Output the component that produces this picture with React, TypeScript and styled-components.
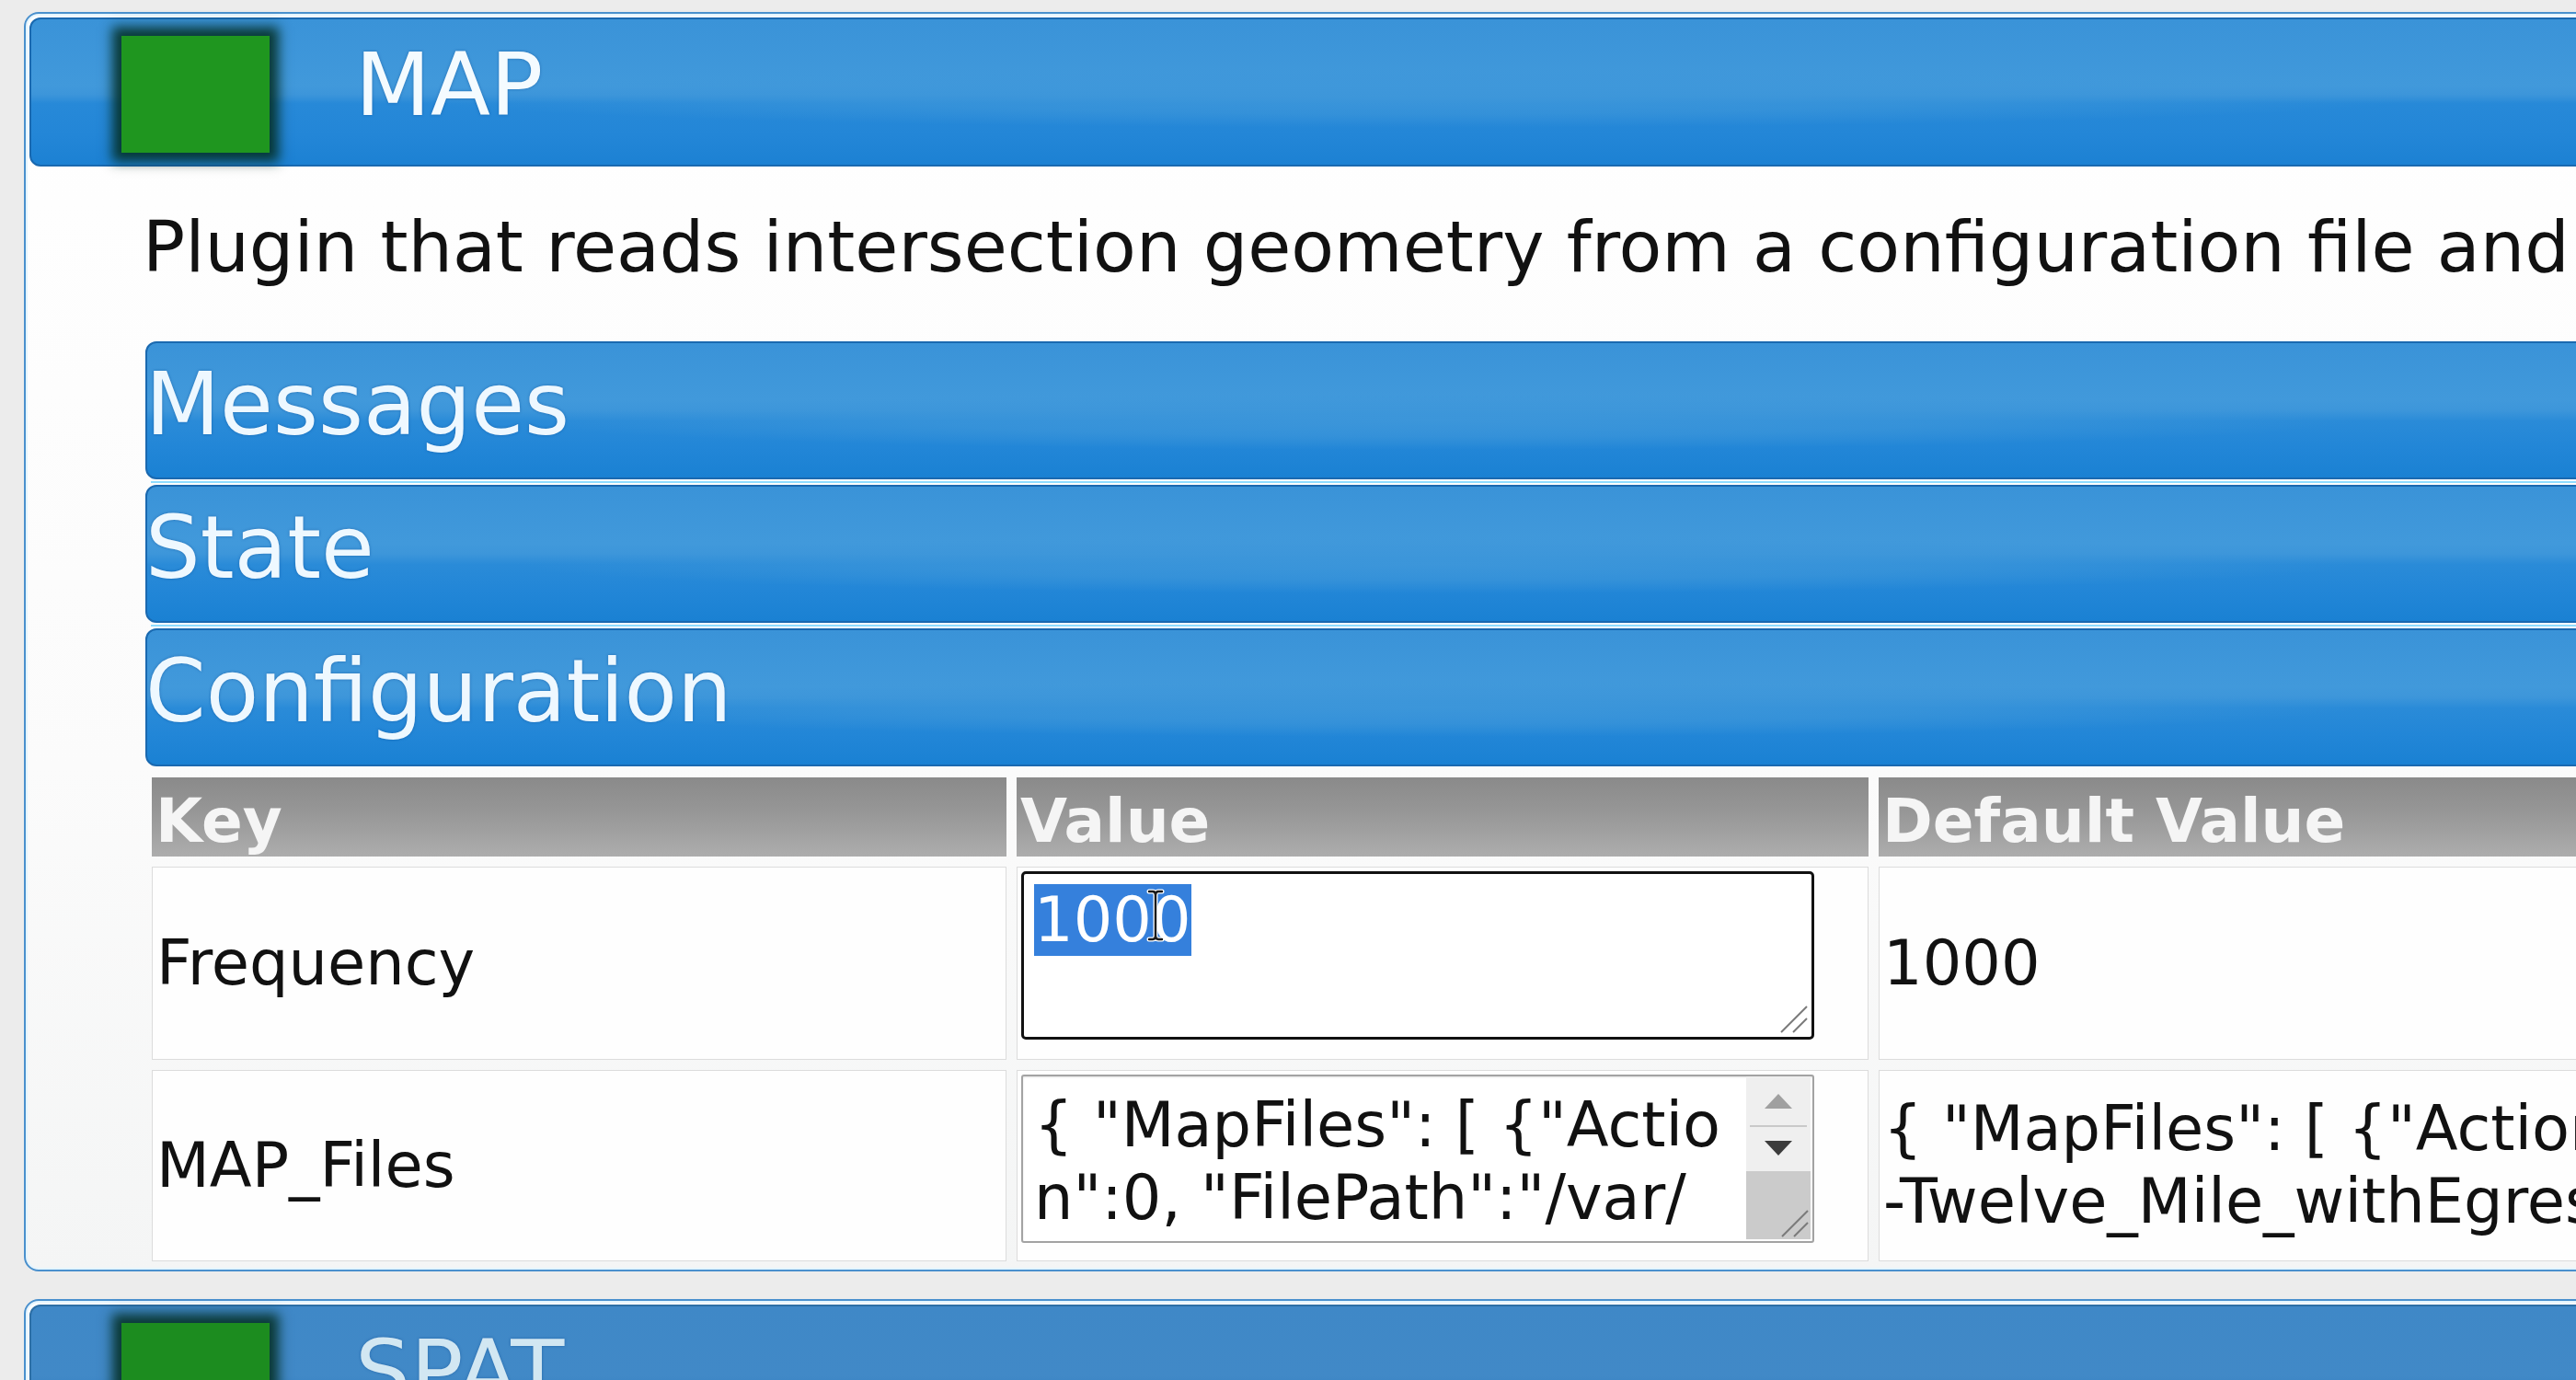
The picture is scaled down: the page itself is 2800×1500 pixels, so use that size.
import React from 'react';
import styled, { createGlobalStyle } from 'styled-components';

const GlobalStyle = createGlobalStyle`
  html, body { margin: 0; padding: 0; }
  body {
    width: 2800px;
    height: 1500px;
    overflow: hidden;
    background: #ececec;
    font-family: "DejaVu Sans", Verdana, sans-serif;
    color: #111;
  }
`;

const Page = styled.main`
  display: flex;
  flex-direction: column;
  gap: 30px;
  padding: 13px 0 0 26px;
  width: 3600px;
`;

const Panel = styled.section`
  border: 2px solid #4a90cd;
  border-radius: 16px;
  background: linear-gradient(to bottom, #ffffff 0%, #fbfbfb 60%, #f4f5f5 100%);
  box-shadow: inset 0 0 0 2px #e4f5ff;
  padding: 4px 0 9px 4px;
`;

const Header = styled.header<{ $muted?: boolean }>`
  box-sizing: border-box;
  height: 162px;
  border: 2px solid ${p => (p.$muted ? '#2d6fa6' : '#1a69b0')};
  border-radius: 12px;
  background: ${p =>
    p.$muted
      ? 'linear-gradient(to bottom, #3f88c7 0%, #4189c7 48%, #3883c3 56%, #347fbf 100%)'
      : 'radial-gradient(ellipse 1100px 34px at 1500px 84px, rgba(62,151,218,0.9) 0%, rgba(62,151,218,0.6) 55%, rgba(62,151,218,0) 100%), linear-gradient(to bottom, #3a93d8 0%, #4199db 46%, #3c95da 52%, #2789d8 58%, #2386d7 80%, #1c81d3 100%)'};
  display: flex;
  align-items: flex-start;
  padding: 18px 0 0 98px;
`;

const StatusLight = styled.div<{ $muted?: boolean }>`
  flex: none;
  width: 161px;
  height: 127px;
  background: ${p => (p.$muted ? '#1c8c1f' : '#1f961f')};
  box-shadow: 0 0 12px 10px rgba(3, 46, 33, 0.88);
`;

const PluginName = styled.h1<{ $muted?: boolean }>`
  margin: -2px 0 0 93px;
  font-size: 95px;
  font-weight: normal;
  line-height: normal;
  color: ${p => (p.$muted ? '#d2e7f2' : '#f4fbff')};
  text-shadow: 0 0 3px rgba(10, 70, 140, 0.55);
`;

const Description = styled.p`
  margin: 43px 0 0 123px;
  font-size: 76.5px;
  line-height: normal;
  white-space: nowrap;
  color: #111;
`;

const Sections = styled.div`
  display: flex;
  flex-direction: column;
  gap: 6px;
  margin: 58px 0 0 126px;
`;

const SectionBar = styled.div<{ $first?: boolean }>`
  position: relative;
  box-sizing: border-box;
  height: 150px;
  border: 2px solid #1a69b0;
  border-radius: 12px;
  background:
    radial-gradient(ellipse 1000px 32px at 1400px 84px, rgba(62, 151, 218, 0.9) 0%, rgba(62, 151, 218, 0.6) 55%, rgba(62, 151, 218, 0) 100%),
    linear-gradient(to bottom, #3a93d8 0%, #4199db 42%, #3d96da 50%, #2a8bd8 58%, #2286d7 78%, #1a81d3 100%);
  padding: 12px 0 0 0;
  font-size: 94px;
  line-height: normal;
  color: #eef8ff;
  text-shadow: 0 0 3px rgba(10, 70, 140, 0.55);
  text-indent: -2px;
  white-space: nowrap;

  &::before {
    content: ${p => (p.$first ? 'none' : "''")};
    position: absolute;
    left: 4px;
    right: 0;
    top: -6px;
    height: 2px;
    background: #8fdcff;
  }
`;

const ConfigGrid = styled.div`
  display: grid;
  grid-template-columns: 929px 926px 2400px;
  grid-template-rows: 86px 210px 208px;
  column-gap: 11px;
  row-gap: 11px;
  margin: 12px 0 0 133px;
`;

const HeadCell = styled.div`
  display: flex;
  align-items: center;
  padding: 8px 4px 0;
  background: linear-gradient(to bottom, #8a8a8a 0%, #979797 45%, #adadad 100%);
  font-size: 66px;
  font-weight: bold;
  color: #f5f5f5;
  white-space: nowrap;
`;

const Cell = styled.div<{ $top?: boolean }>`
  box-sizing: border-box;
  display: flex;
  flex-direction: column;
  justify-content: ${p => (p.$top ? 'flex-start' : 'center')};
  border: 1px solid #dcdcdc;
  background: #fefefe;
  padding: 4px;
  font-size: 67px;
  line-height: 79px;
  white-space: nowrap;
`;

const Line = styled.span`
  display: block;
  white-space: nowrap;
`;

const FocusedField = styled.div`
  position: relative;
  box-sizing: border-box;
  width: 862px;
  height: 183px;
  border: 3px solid #111;
  border-radius: 5px;
  background: #fff;
  padding: 11px;
  font-size: 67px;
  line-height: 78px;
`;

const Selected = styled.span`
  display: inline-block;
  background: #3580dc;
  color: #fff;
`;

const Cursor = styled.svg`
  position: absolute;
  left: 132px;
  top: 16px;
`;

const Grip = styled.svg`
  position: absolute;
  right: 3px;
  bottom: 3px;
`;

const FieldFrame = styled.div`
  position: relative;
  box-sizing: border-box;
  display: flex;
  width: 862px;
  height: 183px;
  border: 2px solid #a3a3a3;
  border-radius: 3px;
  background: #fff;
  box-shadow: inset 0 1px 2px rgba(0, 0, 0, 0.12);
`;

const JsonArea = styled.textarea`
  flex: 1;
  box-sizing: border-box;
  height: 100%;
  margin: 0;
  padding: 14px 21px 0 12px;
  border: none;
  outline: none;
  resize: none;
  overflow: hidden;
  background: transparent;
  font-family: "DejaVu Sans", Verdana, sans-serif;
  font-size: 67px;
  line-height: 79px;
  color: #111;
  word-break: break-all;
`;

const ScrollColumn = styled.div`
  flex: none;
  display: flex;
  flex-direction: column;
  width: 70px;
  margin: 0 2px 2px 0;
  background: #efefef;
`;

const ScrollButton = styled.div<{ $h: number }>`
  height: ${p => p.$h}px;
  display: flex;
  align-items: center;
  justify-content: center;
`;

const ScrollDivider = styled.div`
  height: 2px;
  margin: 0 4px;
  background: #c9c9c9;
`;

const ScrollThumb = styled.div`
  flex: 1;
  margin-top: 2px;
  background: #cbcbcb;
`;

const Arrow = ({ up, color }: { up?: boolean; color: string }) => (
  <svg width="32" height="18" viewBox="0 0 32 18">
    <polygon points={up ? '16,1 31,17 1,17' : '1,1 31,1 16,17'} fill={color} />
  </svg>
);

const GripLines = () => (
  <Grip width="34" height="34" viewBox="0 0 34 34">
    <line x1="4" y1="32" x2="32" y2="4" stroke="#7a7a7a" strokeWidth="2" />
    <line x1="17" y1="32" x2="32" y2="17" stroke="#7a7a7a" strokeWidth="2" />
  </Grip>
);

const IBeam = () => (
  <Cursor width="22" height="58" viewBox="0 0 22 58">
    <g fill="none" strokeLinecap="round">
      <path d="M4 3 H8 Q11 3 11 7 Q11 3 14 3 H18 M11 7 V51 M4 55 H8 Q11 55 11 51 Q11 55 14 55 H18" stroke="#fff" strokeWidth="5" />
      <path d="M4 3 H8 Q11 3 11 7 Q11 3 14 3 H18 M11 7 V51 M4 55 H8 Q11 55 11 51 Q11 55 14 55 H18" stroke="#1a1a1a" strokeWidth="2.4" />
    </g>
  </Cursor>
);

const mapFilesValue =
  '{ "MapFiles": [ {"Action":0, "FilePath":"/var/www/plugins/MAP/ISL_Haggerty-Twelve_Mile_withEgress.xml"} ] }';

const sections = ['Messages', 'State', 'Configuration'];

export default function App() {
  return (
    <>
      <GlobalStyle />
      <Page>
        <Panel>
          <Header>
            <StatusLight />
            <PluginName>MAP</PluginName>
          </Header>
          <Description>
            Plugin that reads intersection geometry from a configuration file and publishes a J2735 MAP message.
          </Description>
          <Sections>
            {sections.map((s, i) => (
              <SectionBar key={s} $first={i === 0}>
                {s}
              </SectionBar>
            ))}
          </Sections>
          <ConfigGrid>
            <HeadCell>Key</HeadCell>
            <HeadCell>Value</HeadCell>
            <HeadCell>Default Value</HeadCell>

            <Cell>Frequency</Cell>
            <Cell $top>
              <FocusedField>
                <Selected>1000</Selected>
                <IBeam />
                <GripLines />
              </FocusedField>
            </Cell>
            <Cell>1000</Cell>

            <Cell>MAP_Files</Cell>
            <Cell $top>
              <FieldFrame>
                <JsonArea readOnly value={mapFilesValue} />
                <ScrollColumn>
                  <ScrollButton $h={53}>
                    <Arrow up color="#a0a0a0" />
                  </ScrollButton>
                  <ScrollDivider />
                  <ScrollButton $h={46}>
                    <Arrow color="#3c3c3c" />
                  </ScrollButton>
                  <ScrollThumb />
                </ScrollColumn>
                <GripLines />
              </FieldFrame>
            </Cell>
            <Cell>
              <Line>{'{ "MapFiles": [ {"Action":0, "FilePath":"/var/www/plugins/MAP/ISL_Haggerty'}</Line>
              <Line>{'-Twelve_Mile_withEgress.xml"} ] }'}</Line>
            </Cell>
          </ConfigGrid>
        </Panel>
        <Panel>
          <Header $muted>
            <StatusLight $muted />
            <PluginName $muted>SPAT</PluginName>
          </Header>
        </Panel>
      </Page>
    </>
  );
}
